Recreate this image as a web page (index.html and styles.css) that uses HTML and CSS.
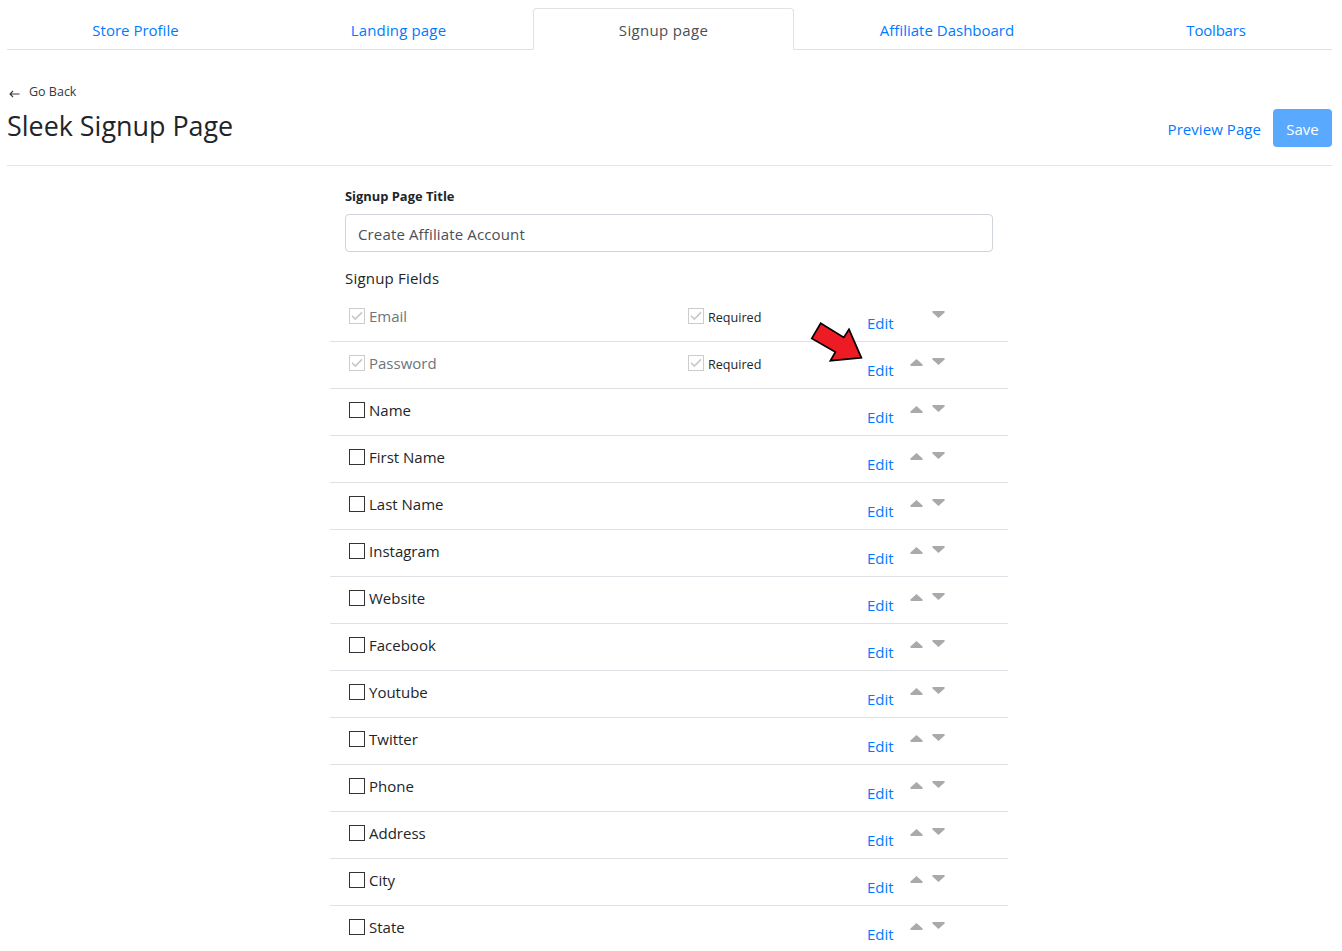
FILE: index.html
```html
<!DOCTYPE html>
<html lang="en">
<head>
<meta charset="utf-8">
<title>Sleek Signup Page</title>
<link rel="stylesheet" href="styles.css">
</head>
<body>
<svg class="defs" aria-hidden="true">
  <symbol id="check" viewBox="0 0 14 14"><path d="M2 6.8 5.3 10.1 12 3.4" fill="none" stroke="#c8c8c8" stroke-width="1.6"/></symbol>
  <symbol id="up" viewBox="0 0 13 7"><path d="M6.5 0 12.6 5.6Q13 7 12 7H1Q0 7 .4 5.6Z" fill="#aaa"/></symbol>
  <symbol id="down" viewBox="0 0 13 7"><path d="M6.5 7 .4 1.4Q0 0 1 0H12Q13 0 12.6 1.4Z" fill="#aaa"/></symbol>
</svg>
<nav class="tabs">
  <a class="tab">Store Profile</a>
  <a class="tab landing">Landing page</a>
  <a class="tab active">Signup page</a>
  <a class="tab">Affiliate Dashboard</a>
  <a class="tab toolbars">Toolbars</a>
</nav>
<header class="head">
  <div class="heading">
    <a class="back"><svg class="back-icon" viewBox="0 0 11 8"><path d="M10.5 4H1M4 1 1 4 4 7" fill="none" stroke="#343a40" stroke-width="1.1"/></svg><span>Go Back</span></a>
    <h1 class="title">Sleek Signup Page</h1>
  </div>
  <div class="actions">
    <a class="preview">Preview Page</a>
    <button class="save">Save</button>
  </div>
</header>
<main class="form">
  <label class="label" for="title">Signup Page Title</label>
  <input class="input" id="title" value="Create Affiliate Account">
  <h2 class="sub">Signup Fields</h2>
  <div class="rows" id="rows"></div>
  <svg class="pointer" viewBox="808 319 58 46"><path d="M820.7 323.2 843.8 337.4 849 329.4 861.4 357.8 830.4 360.7 835.4 352 811.8 338.4Z" fill="#ed1c24" stroke="#000" stroke-width="1.7"/></svg>
</main>
<script src="rows.js"></script>
</body>
</html>
```
FILE: styles.css
```css
* { box-sizing: border-box; }
body {
  margin: 0;
  padding: 8px 10px 0 7px;
  height: 951px;
  overflow: hidden;
  background: #fff;
  color: #212529;
  font: 15px/24px "Open Sans", "Noto Sans", sans-serif;
}
.defs { position: absolute; width: 0; height: 0; }
.tabs {
  display: grid;
  grid-template-columns: 257px 269px 261px 306px 232px;
  height: 42px;
  border-bottom: 1px solid #dee2e6;
}
.tab {
  height: 42px;
  padding-top: 9px;
  border: 1px solid transparent;
  text-align: center;
  color: #007bff;
}
.landing { letter-spacing: .15px; }
.toolbars { letter-spacing: -.2px; }
.active {
  color: #495057;
  background: #fff;
  border-color: #dee2e6 #dee2e6 #fff;
  border-radius: 4px 4px 0 0;
  letter-spacing: .33px;
}
.head {
  display: flex;
  justify-content: space-between;
  height: 116px;
  padding-top: 32px;
  border-bottom: 1px solid #e5e5e5;
}
.back {
  display: flex;
  align-items: center;
  height: 20px;
  padding-left: 2px;
  color: #343a40;
  font-size: 12.5px;
}
.back-icon { width: 11px; height: 8px; margin: 3px 9px 0 0; }
.title { margin: 7px 0 0; font-size: 26.9px; line-height: 34px; font-weight: 400; }
.actions { display: flex; align-items: center; gap: 12px; height: 38px; margin-top: 27px; }
.preview { padding-top: 2px; color: #007bff; letter-spacing: .06px; }
.save {
  width: 59px;
  height: 38px;
  padding: 2px 0 0;
  border: 0;
  border-radius: 4px;
  background: #59a9ff;
  color: #fff;
  font: inherit;
}
.form { width: 678px; margin-left: 323px; padding-top: 20px; }
.label { display: block; height: 28px; padding-left: 15px; line-height: 20px; font-size: 12.9px; font-weight: 700; }
.input {
  display: block;
  width: 648px;
  height: 38px;
  margin-left: 15px;
  padding: 2px 12px 0;
  border: 1px solid #ced4da;
  border-radius: 4px;
  color: #495057;
  font: inherit;
  letter-spacing: .14px;
}
.sub { height: 43px; margin: 0; padding: 14px 0 0 15px; font-size: 15px; line-height: 24px; font-weight: 400; letter-spacing: .2px; }
.row { display: flex; height: 47px; padding-left: 19px; border-bottom: 1px solid #dee2e6; }
.field, .req { display: flex; gap: 4px; padding-top: 13px; }
.field { width: 339px; }
.req { width: 179px; }
.field span { height: 16px; line-height: 16px; }
.req span { font-size: 12.6px; line-height: 19px; }
.box { flex: none; width: 16px; height: 16px; border: 1px solid #333; }
.box svg { display: block; width: 14px; height: 14px; }
.off { color: #6c757d; }
.off .box, .req .box { border-color: #ccc; }
.edit { width: 43px; padding-top: 16px; color: #007bff; }
.up, .down { width: 13px; height: 7px; }
.up { margin: 17px 9px 0 0; }
.down { margin-top: 16px; }
.hidden { visibility: hidden; }
.pointer { position: absolute; left: 807.5px; top: 319px; width: 58px; height: 46px; }
```
FILE: rows.js
```js
const fields = ["Email", "Password", "Name", "First Name", "Last Name", "Instagram", "Website",
  "Facebook", "Youtube", "Twitter", "Phone", "Address", "City", "State"];
const box = on => `<i class="box">${on ? '<svg><use href="#check"/></svg>' : ""}</i>`;
document.getElementById("rows").innerHTML = fields.map((name, i) => {
  const locked = i < 2;
  return `<div class="row">
    <div class="field${locked ? " off" : ""}">${box(locked)}<span>${name}</span></div>
    <div class="req">${locked ? box(true) + "<span>Required</span>" : ""}</div>
    <a class="edit">Edit</a>
    <svg class="up${i ? "" : " hidden"}"><use href="#up"/></svg>
    <svg class="down"><use href="#down"/></svg>
  </div>`;
}).join("");
```
